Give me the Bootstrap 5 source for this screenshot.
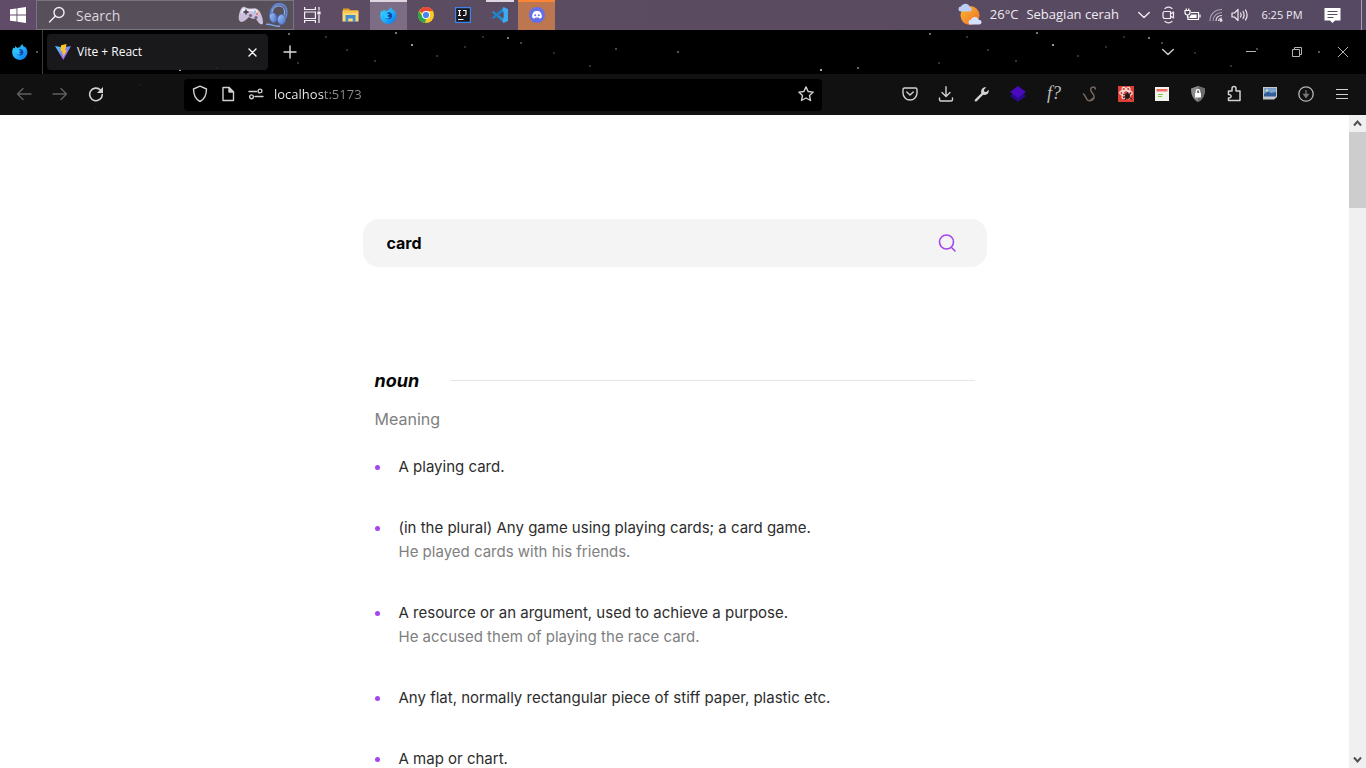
<!DOCTYPE html>
<html lang="en">
<head>
<meta charset="utf-8">
<meta name="viewport" content="width=device-width, initial-scale=1">
<title>Vite + React</title>
<link rel="stylesheet" href="https://cdn.jsdelivr.net/npm/bootstrap@5.3.0/dist/css/bootstrap.min.css">
<style>
body{font-family:"Open Sans","Noto Sans",sans-serif;font-size:12px;background:#fff}
svg{display:block;flex:none}
.bare{background:none;border:0;padding:0;color:inherit;display:flex;align-items:center;justify-content:center;flex:none}
.ln{fill:none;stroke:currentColor;stroke-width:1.4;stroke-linecap:round;stroke-linejoin:round}
/* desktop taskbar */
.taskbar{height:30px;color:#f0ebf3;background:linear-gradient(90deg,#604c69,#5c4c62 30%,#5a4b60 65%,#554963);flex:none}
.start{width:36px}
.find{width:258px;background:#57505b;border:1px solid #7a747f;padding:0 4px 0 11px;gap:2px}
.find input{background:none;border:0;outline:0;color:#e6dfe8;font-size:14px;width:120px;padding:0 0 0 8px}
.find input::placeholder{color:#dcd5df;opacity:1}
.app{width:37px;border-top:2px solid transparent;padding-bottom:2px}
.app-wide{width:39px}
.app-on{background:#7c6d85;border-color:#ded7e2}
.app-call{background:#bd7750;border-color:#fb8435}
.app-open{background:linear-gradient(#ded7e2,#ded7e2) center top/28px 2px no-repeat border-box}
.weather{color:inherit;font-size:13px;padding-right:13px}
.tray{width:24px}
.clock{width:60px;font-size:11px}
.note{width:41px}
.peek{width:5px;border-left:1px solid #a79dad}
/* browser chrome */
.chrome{background-color:#000;color:#fbfbfe;flex:none;
background-image:
radial-gradient(circle at 180px 40px,#aaa 0 1px,transparent 1px),
radial-gradient(circle at 217px 38px,#76604c 0 1px,transparent 1px),
radial-gradient(circle at 412px 15px,#999 0 1px,transparent 1px),
radial-gradient(circle at 37px 22px,#555 0 1px,transparent 1px),
radial-gradient(circle at 289px 4px,#666 0 1px,transparent 1px),
radial-gradient(circle at 396px 3px,#777 0 1px,transparent 1px),
radial-gradient(circle at 437px 26px,#333 0 1px,transparent 1px),
radial-gradient(circle at 375px 31px,#333 0 1px,transparent 1px),
radial-gradient(circle at 465px 17px,#2c2c2c 0 1px,transparent 1px),
radial-gradient(circle at 483px 7px,#2c2c2c 0 1px,transparent 1px),
radial-gradient(circle at 326px 7px,#333 0 1px,transparent 1px),
radial-gradient(circle at 298px 33px,#333 0 1px,transparent 1px),
radial-gradient(circle at 590px 36px,#333 0 1px,transparent 1px),
radial-gradient(circle at 140px 55px,#3c3c3c 0 1px,transparent 1px),
radial-gradient(circle at 508px 8px,#777 0 1px,transparent 1px),
radial-gradient(circle at 521px 13px,#444 0 1px,transparent 1px),
radial-gradient(circle at 347px 20px,#333 0 1px,transparent 1px),
radial-gradient(circle at 554px 23px,#2c2c2c 0 1px,transparent 1px),
radial-gradient(circle at 616px 19px,#54443a 0 1px,transparent 1px),
radial-gradient(circle at 634px 66px,#444 0 1px,transparent 1px),
radial-gradient(circle at 95px 78px,#393939 0 1px,transparent 1px);
background-size:641px 85px}
.tabs{height:44px}
.view{width:43px;border-right:1px solid #3a3a3a;padding-right:2px}
.tab{width:221px;height:36px;background:#1c1c1ee6;border-radius:4px;padding:0 7px 0 8px;margin-left:4px;gap:6px}
.tab a{color:#fbfbfe}
.plus{width:44px;color:#dcdcdc}
.all{width:36px;margin-right:42px;color:#cfcfcf}
.win{width:46px;color:#b4b4b4}
.tools{height:41px;background:rgba(20,20,20,.85);padding:0 6px;gap:70px}
.tool{width:36px;height:32px;padding-bottom:2px;color:#d2d2d2}
.dim{color:#5f5f5f}
.serif-mark{font-family:"Liberation Serif",serif;font-size:18px;font-style:italic;color:#bdbdbd}
.url{height:32px;background:#000;border-radius:4px;padding:0 2px}
.url button{width:28px;color:#cfcfcf;padding-bottom:2px}
.url input{border:0;outline:0;font-size:13px;padding:0 4px;width:100%;color:transparent;background:linear-gradient(90deg,#f4f4f8 54px,#8d8d92 54px);-webkit-background-clip:text;background-clip:text}
/* page */
.page{font-family:Inter,sans-serif}
.sheet{width:100%;max-width:624px;margin:0 auto;padding-top:104px}
.query{height:48px;border-radius:16px;background:#f4f4f4;padding:0 30px 0 24px;color:#a445ed}
.query input{border:0;outline:0;background:none;font-size:16px;font-weight:700;color:#050505;padding:0}
.entry{padding:100px 12px 0}
.entry h2{font-size:18px;line-height:27px;font-weight:700;font-style:italic;color:#050505;gap:31px}
.entry h2::after{content:"";flex:1;height:1px;background:#e6e6e6}
.entry h3{font-size:16px;line-height:24px;font-weight:400;color:#808080;margin:13px 0 24px}
.senses{font-size:15px;line-height:24px;color:#2d2d2d;gap:37px}
.senses li{position:relative;padding-left:24px}
.senses li::before{content:"";position:absolute;left:0;top:10px;width:5px;height:5px;border-radius:50%;background:#a445ed}
.senses p{margin:0;color:#808080}
.rail{width:17px;background:#f0f0f0;color:#505050;flex:none}
.rail button{height:17px;width:17px}
.thumb{height:76px;background:#cdcdcd}
</style>
</head>
<body class="d-flex flex-column vh-100 overflow-hidden">
<svg width="0" height="0" class="position-absolute" aria-hidden="true">
<defs>
<linearGradient id="fx" x1="0" y1="0" x2="1" y2="1"><stop offset="0" stop-color="#35dcff"/><stop offset=".55" stop-color="#1fabff"/><stop offset="1" stop-color="#0a6be0"/></linearGradient>
<linearGradient id="vt" x1="0" y1="0" x2="1" y2="1"><stop offset="0" stop-color="#41d1ff"/><stop offset="1" stop-color="#bd34fe"/></linearGradient>
<linearGradient id="hp" x1="0" y1="0" x2="1" y2="1"><stop offset="0" stop-color="#a6c6ff"/><stop offset="1" stop-color="#4a6fc0"/></linearGradient>
<symbol id="firefox" viewBox="0 0 16 16"><path fill="url(#fx)" d="M1.6 3.4 2.8 4.6 3.4 2l1.8 2C6 3.4 7 3.2 8 3.4 8.3 2 9.4.8 10.6.2c0 1.6 1.2 2.2 1.8 3l.8-.6c.2 1 1 1.6 1.6 2.8C16.800 9.600 13.800 15.900 8 15.900 3.500 15.900.2 12.600.2 8.300.2 6.300.7 4.700 1.600 3.400z"/><path fill="#1446a8" d="M8.200 5c2 0 3.200 1.500 3.200 3.200S10.200 11.500 8 11.500 4.600 10 4.600 8.400l1.500-.9C5.900 6.900 6.100 6.200 6.700 5.700z"/><path fill="#2cc2ff" d="M3.400 5.600c1.500-.7 3-.1 3.600.7l1.900.1c-.3 1.200-1.600 1.400-1.700 1.700-.2 1 .7 1.700 2 1.200-.6 1.500-2.900 2-4.400.8C3.700 9 3 7.300 3.400 5.600z"/></symbol>
<symbol id="chev" viewBox="0 0 12 12"><path class="ln" d="M.7 3.400 6 8.600l5.300-5.200"/></symbol>
</defs></svg>

<header class="taskbar d-flex" aria-label="Taskbar">
<button class="bare start" aria-label="Start"><svg width="16" height="16" fill="#fff"><path d="M0 2.300 6.500 1.400v6.100H0zM7.400 1.300 16 0v7.500H7.400zM0 8.400h6.500v6.200L0 13.700zM7.400 8.400H16V16l-8.600-1.300z"/></svg></button>
<label class="find d-flex align-items-center">
<svg class="ln" width="18" height="18"><circle cx="11" cy="6.500" r="5"/><path d="M7.400 10 1.500 16"/></svg>
<input type="text" placeholder="Search" class="flex-grow-1" aria-label="Search the desktop">
<svg width="26" height="24" viewBox="0 0 26 24"><path fill="#cdbfdb" d="M1 17C0 14 2 5 5 4c2-.8 3 1 5 1.300 4 .6 5-.6 8 .2 4 1 7 9 7 14 0 4-5 1-7-4-3 1-5-.2-7-1.500C7 18 3 21 1 17z"/><path fill="#efe6f2" d="M4 6c2-2 3 0 6 .2 4 .3 6-.4 8 .4 2 .7 3 3 3.500 4C17 8 8 7 3 11z"/><path stroke="#4a4a5c" stroke-width="1.800" d="M8 6.500v5M5.500 9h5"/><circle cx="12.500" cy="12.500" r="1.600" fill="#6d6a80"/><circle cx="18" cy="14.500" r="1.600" fill="#6d6a80"/><circle cx="17" cy="8.500" r="1" fill="#5bc1ea"/><circle cx="20" cy="9" r="1" fill="#f1c658"/><circle cx="19" cy="11" r="1" fill="#e56d64"/></svg>
<svg width="23" height="26" viewBox="0 0 23 26" fill="none"><path stroke="#5f87d6" stroke-width="2" d="M5 17C3 8 8 1.500 14 2c7 .500 8 8 5 15"/><path stroke="#9fc0f8" d="M6.500 14C5 8 9 3.500 13.500 4c5 .600 6 5 4 11"/><ellipse cx="7" cy="15.500" rx="3.500" ry="5" transform="rotate(-15 7 15)" fill="url(#hp)" stroke="#4a6cb8"/><ellipse cx="15.500" cy="17.500" rx="4" ry="5" fill="url(#hp)" stroke="#4a6cb8"/><path stroke="#7ea6ee" stroke-width="1.300" d="M0 22.500c5-1.500 8 3 14 1.500"/></svg>
</label>
<nav class="d-flex" aria-label="Applications">
<button class="bare app" aria-label="Task view"><svg width="17" height="16" fill="none" stroke="#f4f0f6" stroke-width="1.200"><path d="M.6 0v2.500h10.800V0M.6 5h10.800v6.500H.6zM.6 16v-2.500h10.800V16M15 0v3.500M15 8v8"/><path fill="#fff" d="M14 5h2v2h-2z"/></svg></button>
<button class="bare app app-wide" aria-label="File Explorer"><svg width="17" height="16"><path fill="#dca02c" d="M1 1.500h6l1.500 2H16V7H1z"/><path fill="#ffd875" d="M.5 5h16v9.500H.5z"/><path fill="#f8c650" d="M.5 3.500h16V6H.5z"/><path fill="#3f8fd0" d="M3.500 8h10v7h-2.800v-3.500H6.300V15H3.500z"/></svg></button>
<button class="bare app app-on" aria-label="Firefox"><svg width="17" height="17"><use href="#firefox"/></svg></button>
<button class="bare app" aria-label="Chrome"><svg width="16" height="16" viewBox="0 0 16 16"><circle cx="8" cy="8" r="8" fill="#fbc825"/><path fill="#e64a37" d="M1 4a8 8 0 0 1 14 0H8v4z"/><path fill="#2da44e" d="M1 4l3.500 6L8 12l-1 4A8 8 0 0 1 1 4z"/><circle cx="8" cy="8" r="4" fill="#fff"/><circle cx="8" cy="8" r="3.100" fill="#4285f4"/></svg></button>
<button class="bare app" aria-label="IntelliJ IDEA"><svg width="16" height="16"><path fill="#17171c" stroke="#3d85e8" stroke-width="1.200" d="M.6.600h14.800v14.800H.600z"/><path fill="none" stroke="#fff" stroke-width="1.200" d="M3 3.500h3M4.500 3.500v5M3 8.500h3M8 3.500h3V7q0 1.500-1.500 1.500H8M3 12.500h5.500"/></svg></button>
<button class="bare app app-open" aria-label="Visual Studio Code"><svg width="16" height="16"><path fill="#2489ca" d="m0 5 1.400-1L12 11.800V16L0 5.500z"/><path fill="#1f82c8" d="m0 11 1.400 1L12 4.200V0L0 10.500z"/><path fill="#3eaaf0" d="M11.500 0 16 2v12l-4.500 2-.8-1.500V2z"/><path fill="#5c4c62" d="M11.600 4.600v6.800L7.200 8z"/></svg></button>
<button class="bare app app-call" aria-label="Discord"><svg width="16" height="16"><circle cx="8" cy="8" r="8" fill="#6470e8"/><path fill="#fff" d="M5.800 4.300c1.400-.5 3-.5 4.400 0 1.500.3 2.700 3 2.700 6-.7.800-1.700 1.200-2.600 1.300l-.7-1H6.400l-.7 1c-.9-.1-1.900-.5-2.600-1.300 0-3 1.200-5.700 2.700-6z"/><circle cx="6.200" cy="8.300" r="1" fill="#6470e8"/><circle cx="9.800" cy="8.300" r="1" fill="#6470e8"/></svg></button>
</nav>
<div class="d-flex ms-auto">
<a href="#" class="weather d-flex align-items-center gap-2 text-decoration-none">
<svg width="24" height="24"><defs><linearGradient id="sn" x2="1" y2="1"><stop stop-color="#ffb62e"/><stop offset="1" stop-color="#ed6f2b"/></linearGradient></defs><circle cx="12" cy="12.500" r="9.500" fill="url(#sn)"/><path fill="#bccdf5" d="M3 8.500a2.500 2.500 0 0 1 0-5C5-.5 11 0 11.500 4c3 0 3 4 .5 4.500z"/><path fill="#d5e2ff" d="M13 21.500c-3.500 0-3-5 0-4.700 1-4 7-3.500 7.500 0 4 0 4 4.700.5 4.700z"/></svg>
<span>26°C</span><span>Sebagian cerah</span></a>
<button class="bare tray" aria-label="Hidden icons"><svg width="12" height="12"><use href="#chev"/></svg></button>
<button class="bare tray" aria-label="Meet now"><svg class="ln" width="13" height="18"><path stroke-width="1.200" d="M3 2.500C5 1 8 1 10 2.500M3 15.500c2 1.500 5 1.500 7 0M3 5.500h5.500v7H3Q1 12.500 1 10.500v-3Q1 5.500 3 5.500M8.500 8l3-2v6l-3-2"/></svg></button>
<button class="bare tray" aria-label="Battery"><svg width="17" height="15" fill="none" stroke="#fff" stroke-width="1.200"><path d="M7 4.500h7.500v7H4V8M16 6.500v3M1 2.500h5v2Q6 7 3.500 7 1 7 1 4.500zM2.300.500v2M4.700.500v2M3.500 7v3"/><path fill="#fff" d="M7.500 7H12v2.500H6z"/></svg></button>
<button class="bare tray" aria-label="Wi-Fi"><svg width="14" height="14" fill="none" stroke="#e6dfea" stroke-width="1.100"><path opacity=".6" d="M1 13C1 6 6 1.500 13 1.500M4 13c0-5 4-8.500 9-8.500"/><path d="M7 13c0-3.500 2.500-5.500 6-5.500M9.500 13c0-1.500 1.500-3 3.500-3"/><circle cx="12" cy="12.300" r="1" fill="#fff"/></svg></button>
<button class="bare tray" aria-label="Volume"><svg class="ln" width="18" height="14"><path stroke-width="1.200" d="M1 5h2.500L7 1.500v11L3.500 9H1zM9.500 5q1.300 2 0 4M12 3.500q2.200 3.500 0 7M14.500 2q3.200 5 0 10"/></svg></button>
<button class="bare clock">6:25 PM</button>
<button class="bare note me-2" aria-label="Notifications"><svg width="17" height="17"><path fill="#fff" d="M.5 1h16v12.500H11L8.500 16 6 13.500H.500z"/><path stroke="#594b64" d="M3.500 4.500h10M3.500 7.500h10M3.500 10.500h6"/></svg></button>
<button class="bare peek" aria-label="Show desktop"></button>
</div>
</header>

<section class="chrome" aria-label="Browser">
<div class="tabs d-flex align-items-center">
<button class="bare view h-100" aria-label="Firefox View"><svg width="16" height="16"><use href="#firefox"/></svg></button>
<div class="tab d-flex align-items-center">
<svg width="16" height="16" viewBox="0 0 16 16"><path fill="url(#vt)" d="M0 2 8 3.500 16 2 8.300 16z"/><path fill="#ffc61e" d="M11.500 0 6 1.200 5.600 7.500l2-.4-.6 2.800 1.500-.4-.8 4.500L12 6l-2 .4.900-3z"/></svg>
<a href="#" class="text-decoration-none flex-grow-1">Vite + React</a>
<button class="bare p-1" aria-label="Close tab"><svg class="ln" width="9" height="9"><path d="m1 1 7 7M8 1 1 8"/></svg></button>
</div>
<button class="bare plus h-100" aria-label="New tab"><svg class="ln" width="14" height="14"><path d="M7 1v12M1 7h12"/></svg></button>
<button class="bare all h-100 ms-auto" aria-label="List all tabs"><svg width="12" height="12"><use href="#chev"/></svg></button>
<button class="bare win h-100" aria-label="Minimize"><svg width="10" height="10" stroke="currentColor"><path d="M0 4.500h10"/></svg></button>
<button class="bare win h-100" aria-label="Restore"><svg width="10" height="10" fill="none" stroke="currentColor"><path d="M.5 2.500h7v7h-7zM2.500 2.500v-2h7v7h-2"/></svg></button>
<button class="bare win h-100" aria-label="Close"><svg width="10" height="10" stroke="currentColor"><path d="m0 0 10 10M10 0 0 10"/></svg></button>
</div>
<div class="tools d-flex align-items-center">
<div class="d-flex">
<button class="bare tool dim" aria-label="Back"><svg class="ln" width="16" height="14"><path d="M15 7H1.500M7 1.500 1.500 7 7 12.500"/></svg></button>
<button class="bare tool dim" aria-label="Forward"><svg class="ln" width="16" height="14"><path d="M1 7h13.500M9 1.500 14.500 7 9 12.500"/></svg></button>
<button class="bare tool" aria-label="Reload"><svg class="ln" width="16" height="16"><path stroke-width="1.600" d="M12.500 4A6.300 6.300 0 1 0 14.300 8.500"/><path fill="currentColor" stroke="none" d="M15 1v6H9z"/></svg></button>
</div>
<form class="url d-flex flex-grow-1" onsubmit="return false">
<button type="button" class="bare" aria-label="Tracking protection"><svg class="ln" width="16" height="18"><path d="M8 1.200 14.500 4c0 6-1.500 10-6.500 12.500C3 14 1.500 10 1.500 4z"/></svg></button>
<button type="button" class="bare" aria-label="Page information"><svg class="ln" width="14" height="16"><path d="M2 1.500h6l4.500 4.500v8.500H2z"/><path fill="currentColor" d="M8 1.500V6h4.500z"/></svg></button>
<button type="button" class="bare" aria-label="Permissions"><svg class="ln" width="16" height="12"><path d="M1 3.500h7.500M7 8.500h8"/><circle cx="12" cy="3" r="1.900"/><circle cx="3.500" cy="8.800" r="1.900"/></svg></button>
<input type="text" value="localhost:5173" aria-label="Address">
<button type="button" class="bare" aria-label="Bookmark this page"><svg class="ln" width="16" height="16"><path d="m8 .9 2.100 4.600 5.100.6-3.700 3.400 1 5L8 12l-4.500 2.500 1-5L.8 6.100l5.100-.6z"/></svg></button>
</form>
<div class="d-flex">
<button class="bare tool" aria-label="Save to Pocket"><svg class="ln" width="16" height="14"><path d="M2.500 1h11Q15 1 15 2.500V6A7 7 0 0 1 1 6V2.500Q1 1 2.500 1zM4.800 5 8 8l3.200-3"/></svg></button>
<button class="bare tool" aria-label="Downloads"><svg class="ln" width="16" height="16"><path d="M8 .800V10M4 6.500l4 4 4-4M1.500 12v1.500q0 1.500 1.500 1.500h10q1.500 0 1.500-1.500V12"/></svg></button>
<button class="bare tool" aria-label="Developer tools"><svg width="16" height="16" fill="currentColor"><path d="M1 13.500 7.300 7.200C6.400 3.300 9 .7 12.300 1.300L10 3.700l.3 2 2 .3 2.400-2.300c.6 3.300-2 5.900-5.500 5L2.700 15.200q-1 .7-1.700 0t0-1.700z"/></svg></button>
<button class="bare tool" aria-label="Layers"><svg width="16" height="16"><path fill="#2b0a8f" d="m0 10 8-5.500 8 5.500-8 5.700z"/><path fill="#4a0bc0" d="m0 6 8-6 8 6-8 5.700z"/></svg></button>
<button class="bare tool serif-mark" aria-label="Font finder">f?</button>
<button class="bare tool" aria-label="Stylus"><svg width="16" height="16" fill="none" stroke="#76675c" stroke-width="1.500"><path d="M13.500 3.500C13 0 8.500.500 8.700 4c.2 2.500 3.600 4 3.400 7-.3 4-5.600 4.500-7.100 2.500C3.500 11 3 9 1 7.500M8 14.500l4-3"/></svg></button>
<button class="bare tool" aria-label="React developer tools"><svg width="16" height="16"><path fill="#db3f35" d="M0 0h16v16H0z"/><g fill="none" stroke="#f6dedb" stroke-width="1.300"><ellipse cx="8" cy="7" rx="6.300" ry="2.500"/><ellipse cx="8" cy="7" rx="6.300" ry="2.500" transform="rotate(60 8 7)"/><ellipse cx="8" cy="7" rx="6.300" ry="2.500" transform="rotate(120 8 7)"/></g><ellipse cx="9.500" cy="10" rx="2.500" ry="3" fill="#2d1715"/><path stroke="#2d1715" d="m5 8 9 5M5 12l8-5M7 14l3-8"/></svg></button>
<button class="bare tool" aria-label="Page notes"><svg width="14" height="14"><path fill="#f2f2ee" d="M0 0h14v14H0z"/><path fill="#f46a62" d="M1.500 2h11v2.500h-11z"/><path stroke="#7fca45" d="M3 7.500h5M3 9.500h4"/></svg></button>
<button class="bare tool" aria-label="Privacy shield"><svg width="16" height="16"><path fill="#8b8b8b" d="M8 0 15 2.500C15 9 13 13.500 8 16 3 13.500 1 9 1 2.500z"/><path fill="#6b6b6b" d="M8 0 15 2.500C15 9 13 13.500 8 16z"/><path fill="#fff" d="M5 7h6v4.500H5z"/><path fill="none" stroke="#fff" stroke-width="1.200" d="M6.200 7V5.500a1.800 1.800 0 0 1 3.600 0V7"/></svg></button>
<button class="bare tool" aria-label="Extensions"><svg class="ln" width="16" height="17"><path d="M2.500 6H6V3.500a2 2 0 0 1 4 0V6h4v9.500H2.500V13C6 13.200 6 9.300 2.500 9.500z" stroke-width="1.500"/></svg></button>
<button class="bare tool" aria-label="Image viewer"><svg width="16" height="13"><path fill="#c3c8cd" d="M1 0h14v10l-3 2.500H1z"/><path fill="#315e9a" d="M2 1.500h12v8H2z"/><path fill="#7ba5cf" d="M2 1.500h12V5L9 6 6 4.500 2 7z"/><circle cx="5" cy="3.500" r="1" fill="#fff4a5"/></svg></button>
<button class="bare tool" aria-label="Download manager"><svg width="16" height="16" fill="none" stroke="#b5b5b5" stroke-width="1.300"><circle cx="8" cy="8" r="7.200"/><path fill="#777" stroke="#777" d="M8 4v5M5.800 8.500h4.400L8 11.500z"/></svg></button>
<button class="bare tool" aria-label="Menu"><svg width="12" height="12" stroke="currentColor"><path d="M0 1.500h12M0 6.500h12M0 10.500h12"/></svg></button>
</div>
</div>
</section>

<div class="page d-flex flex-grow-1 overflow-hidden">
<main class="flex-grow-1 overflow-hidden">
<div class="sheet">
<form class="query d-flex align-items-center" onsubmit="return false">
<input type="text" class="flex-grow-1" value="card" aria-label="Word">
<button class="bare" aria-label="Look up"><svg width="20" height="20" class="ln"><circle cx="9.500" cy="9" r="7" stroke-width="1.600"/><path stroke-width="1.600" d="m14.500 14.500 3.500 3.500"/></svg></button>
</form>
<section class="entry">
<h2 class="d-flex align-items-center m-0">noun</h2>
<h3>Meaning</h3>
<ul class="senses list-unstyled d-flex flex-column">
<li>A playing card.</li>
<li>(in the plural) Any game using playing cards; a card game.<p>He played cards with his friends.</p></li>
<li>A resource or an argument, used to achieve a purpose.<p>He accused them of playing the race card.</p></li>
<li>Any flat, normally rectangular piece of stiff paper, plastic etc.</li>
<li>A map or chart.</li>
</ul>
</section>
</div>
</main>
<div class="rail d-flex flex-column">
<button class="bare" aria-label="Scroll up"><svg width="9" height="9"><path fill="none" stroke="currentColor" stroke-width="2" d="m1 6.500 3.500-4L8 6.500"/></svg></button>
<div class="thumb"></div>
<button class="bare mt-auto" aria-label="Scroll down"><svg width="9" height="9"><path fill="none" stroke="currentColor" stroke-width="2" d="m1 2.500 3.500 4L8 2.500"/></svg></button>
</div>
</div>
<script src="https://cdn.jsdelivr.net/npm/bootstrap@5.3.0/dist/js/bootstrap.bundle.min.js"></script>
</body>
</html>
